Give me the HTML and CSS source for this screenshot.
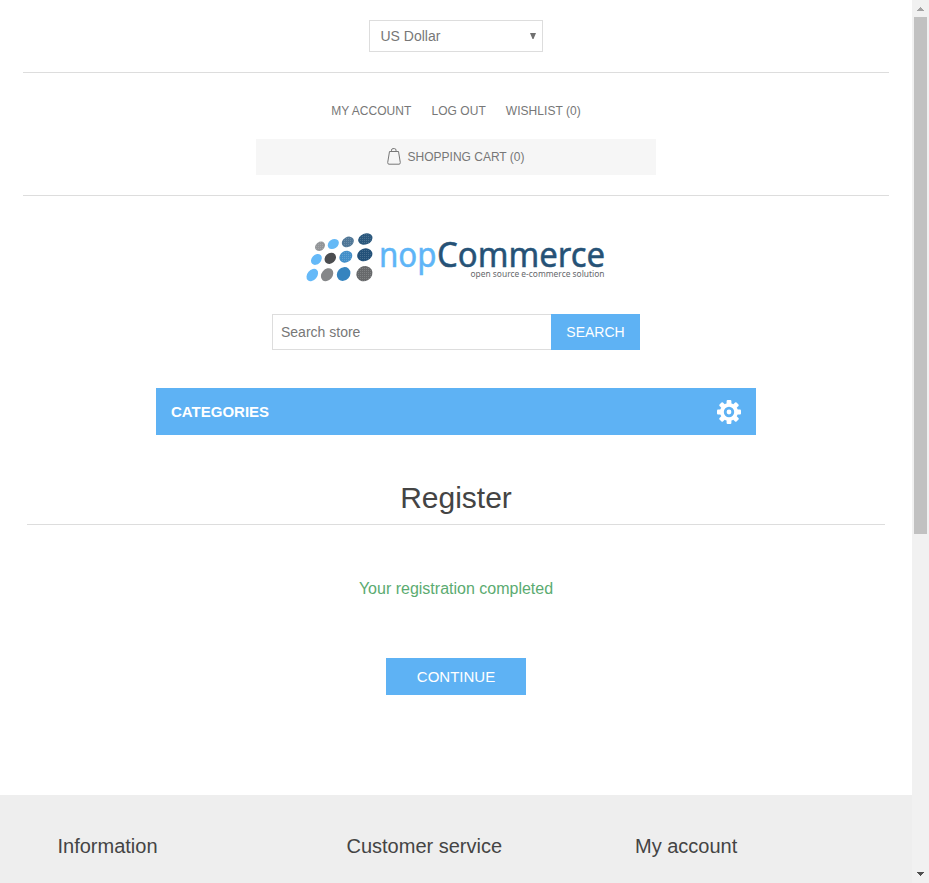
FILE: index.html
```
<!DOCTYPE html>
<html lang="en">
<head>
<meta charset="utf-8">
<title>nopCommerce - Register</title>
<link rel="stylesheet" href="styles.css">
</head>
<body>
<div class="page">
  <header class="header">
    <div class="currency-bar"><div class="select"><span>US Dollar</span>
      <svg width="6" height="6" viewBox="0 0 6 6"><path d="M0 0h6L3.5 6h-1z" fill="#707070"/></svg></div></div>
    <div class="links-bar">
      <nav class="links"><a>MY ACCOUNT</a><a>LOG OUT</a><a>WISHLIST (0)</a></nav>
      <div class="cart">
        <svg width="14" height="17" viewBox="0 0 14 17" fill="none" stroke="#777"><path d="M2.5 3.5h9L13.3 14.5Q13.4 16.2 12 16.2H2Q.6 16.2.7 14.5zM4.5 3.5V2.2Q4.5.6 6 .6H7.5Q9 .6 9 2.2v1.3"/></svg>
        <span>SHOPPING CART (0)</span>
      </div>
    </div>
    <svg class="logo" width="300" height="52" viewBox="306 232 300 52">
      <defs><pattern id="dots" width="2" height="2" patternUnits="userSpaceOnUse"><rect width="1" height="1" fill="#fff" opacity=".16"/></pattern></defs>
      <g>
        <ellipse cx="320" cy="246.3" rx="5.4" ry="4.3" fill="#929598" transform="rotate(-38 320 246.3)"/>
        <ellipse cx="333.3" cy="244" rx="6" ry="4.6" fill="#65b9f6" transform="rotate(-35 333.3 244)"/>
        <ellipse cx="347.8" cy="241.9" rx="6.4" ry="4.9" fill="#507797" transform="rotate(-30 347.8 241.9)"/>
        <ellipse cx="365.4" cy="239" rx="7.4" ry="5.5" fill="#2b587d" transform="rotate(-22 365.4 239)"/>
        <ellipse cx="316.4" cy="259.4" rx="6.1" ry="4.7" fill="#65b9f8" transform="rotate(-46 316.4 259.4)"/>
        <ellipse cx="330.3" cy="258.3" rx="6.2" ry="5.1" fill="#4b4d50" transform="rotate(-42 330.3 258.3)"/>
        <ellipse cx="345.8" cy="256.7" rx="6.8" ry="5.6" fill="#438fc9" transform="rotate(-35 345.8 256.7)"/>
        <ellipse cx="364.8" cy="254.8" rx="7.8" ry="6.2" fill="#235179" transform="rotate(-22 364.8 254.8)"/>
        <ellipse cx="312.3" cy="275" rx="6.9" ry="4.9" fill="#65b9f8" transform="rotate(-50 312.3 275)"/>
        <ellipse cx="327.1" cy="274.7" rx="7.1" ry="5.5" fill="#858789" transform="rotate(-50 327.1 274.7)"/>
        <ellipse cx="343.6" cy="274" rx="7.3" ry="6.4" fill="#3684bf" transform="rotate(-48 343.6 274)"/>
        <ellipse cx="364.4" cy="273.7" rx="8.3" ry="7.4" fill="#67696b" transform="rotate(-30 364.4 273.7)"/>
      </g>
      <g fill="url(#dots)"><circle cx="320" cy="246.3" r="4.5"/><circle cx="347.8" cy="242" r="5"/><circle cx="365.4" cy="239" r="5.5"/><circle cx="345.8" cy="256.7" r="5.5"/><circle cx="364.8" cy="254.8" r="6"/><circle cx="364.4" cy="273.7" r="7.4"/></g>
      <text class="brand light" x="379" y="266.5" textLength="57.5" lengthAdjust="spacingAndGlyphs">nop</text>
      <text class="brand dark" x="437" y="266.5" textLength="168" lengthAdjust="spacingAndGlyphs">Commerce</text>
      <text class="tagline" x="470.5" y="277" textLength="134" lengthAdjust="spacingAndGlyphs">open source e-commerce solution</text>
    </svg>
    <div class="search"><div class="search-input">Search store</div><div class="search-button">SEARCH</div></div>
  </header>
  <div class="categories"><span>CATEGORIES</span>
    <svg width="24" height="24" viewBox="-12 -12 24 24">
      <g fill="#fff"><rect x="-2.4" y="-12" width="4.8" height="24" rx="1"/><rect x="-2.4" y="-12" width="4.8" height="24" rx="1" transform="rotate(45)"/><rect x="-2.4" y="-12" width="4.8" height="24" rx="1" transform="rotate(90)"/><rect x="-2.4" y="-12" width="4.8" height="24" rx="1" transform="rotate(135)"/><circle r="9"/></g>
      <circle r="3.8" fill="none" stroke="#5eb2f4" stroke-width="2.8"/>
    </svg>
  </div>
  <main class="main">
    <h1>Register</h1>
    <p class="result">Your registration completed</p>
    <div class="continue">CONTINUE</div>
  </main>
  <footer class="footer"><h2>Information</h2><h2>Customer service</h2><h2>My account</h2></footer>
</div>
<div class="scrollbar">
  <svg width="17" height="17" viewBox="0 0 17 17"><path d="M5 11h7v-1h-1V9h-1V8H9V7H8v1H7v1H6v1H5z" fill="#a3a3a3"/></svg>
  <div class="thumb"></div>
  <svg class="down" width="17" height="17" viewBox="0 0 17 17"><path d="M5 6h7v1h-1v1h-1v1H9v1H8V9H7V8H6V7H5z" fill="#505050"/></svg>
</div>
</body>
</html>
```
FILE: styles.css
```
* { box-sizing: border-box; }
body {
  margin: 0;
  height: 883px;
  display: flex;
  overflow: hidden;
  background: #fff;
  color: #777;
  font: 14px "Liberation Sans", Arial, sans-serif;
}
svg { display: block; flex: none; }
.page { width: 912px; height: 883px; display: flex; flex-direction: column; align-items: center; }
.header { width: 866px; display: flex; flex-direction: column; align-items: center; }
.currency-bar { width: 100%; height: 73px; padding-top: 20px; border-bottom: 1px solid #ddd; }
.select {
  width: 174px; height: 32px; margin: 0 auto; padding: 0 6px 0 10.5px;
  display: flex; align-items: center; justify-content: space-between;
  border: 1px solid #ddd;
}
.links-bar { width: 100%; height: 123px; padding-top: 30px; border-bottom: 1px solid #ddd; font-size: 12px; }
.links { height: 16px; line-height: 16px; display: flex; justify-content: center; gap: 20px; letter-spacing: 0.05px; }
.cart {
  width: 400px; height: 36px; margin: 20px auto 0; padding: 0 1px 1px 0;
  display: flex; align-items: center; justify-content: center; gap: 7px;
  background: #f6f6f6;
}
.logo { margin-top: 36px; overflow: visible; }
.brand { font-family: "Noto Sans", "Open Sans", sans-serif; font-size: 34px; stroke-width: 0.5px; }
.light { fill: #5eb5f7; stroke: #5eb5f7; }
.dark { fill: #265276; stroke: #265276; }
.tagline { font: 8px "Noto Sans", "Open Sans", sans-serif; fill: #66686b; }
.search { margin-top: 30px; height: 36px; display: flex; line-height: 34px; }
.search-input { width: 279px; padding-left: 8px; border: 1px solid #ddd; border-right: 0; }
.search-button { width: 89px; line-height: 36px; text-align: center; background: #5eb2f4; color: #fff; }
.categories {
  width: 600px; height: 47px; margin-top: 38px; padding: 0 15px;
  display: flex; flex: none; align-items: center; justify-content: space-between;
  background: #5eb2f4; color: #fff; font-size: 15px; font-weight: bold;
}
.main { width: 858px; height: 360px; display: flex; flex-direction: column; align-items: center; }
h1 {
  width: 100%; height: 55px; margin: 35px 0 0; padding-top: 10px;
  border-bottom: 1px solid #ddd; text-align: center;
  font-size: 30px; font-weight: normal; line-height: 36px; color: #444;
}
.result { margin: 54px 0 0; line-height: 20px; font-size: 16px; color: #5bab71; }
.continue { width: 140px; height: 37px; margin-top: 59px; background: #5eb2f4; color: #fff; font-size: 15px; line-height: 37px; text-align: center; }
.footer { width: 912px; height: 88px; padding: 39px 0 0 57.5px; display: grid; grid-template-columns: 289px 288.5px 1fr; background: #eee; }
h2 { margin: 0; font-size: 20px; font-weight: normal; line-height: 24px; color: #444; }
.scrollbar { width: 17px; height: 883px; display: flex; flex-direction: column; background: #f1f1f1; }
.thumb { width: 13px; height: 517px; margin-left: 2px; background: #c1c1c1; }
.down { margin-top: auto; }
```
